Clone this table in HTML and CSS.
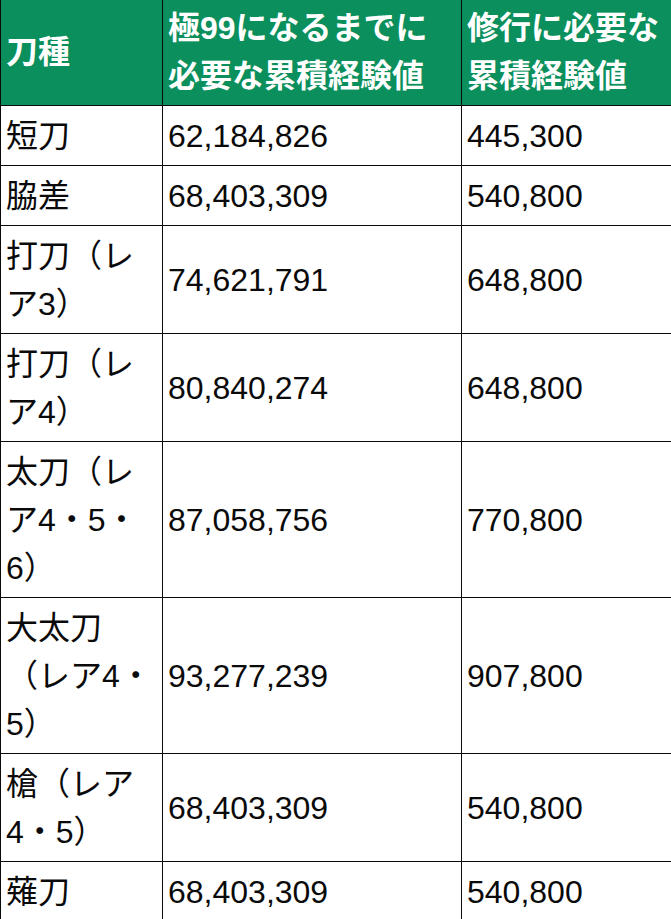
FILE: index.html
```html
<!DOCTYPE html>
<html lang="ja">
<head>
<meta charset="utf-8">
<link rel="stylesheet" href="styles.css">
</head>
<body>
<table class="exp-table">
  <colgroup>
    <col class="c1">
    <col class="c2">
    <col class="c3">
  </colgroup>
  <thead>
    <tr>
      <th>刀種</th>
      <th>極99になるまでに必要な累積経験値</th>
      <th>修行に必要な累積経験値</th>
    </tr>
  </thead>
  <tbody>
    <tr><td>短刀</td><td>62,184,826</td><td>445,300</td></tr>
    <tr><td>脇差</td><td>68,403,309</td><td>540,800</td></tr>
    <tr><td>打刀（レア3）</td><td>74,621,791</td><td>648,800</td></tr>
    <tr><td>打刀（レア4）</td><td>80,840,274</td><td>648,800</td></tr>
    <tr><td>太刀（レア4・5・6）</td><td>87,058,756</td><td>770,800</td></tr>
    <tr><td>大太刀（レア4・5）</td><td>93,277,239</td><td>907,800</td></tr>
    <tr><td>槍（レア4・5）</td><td>68,403,309</td><td>540,800</td></tr>
    <tr><td>薙刀</td><td>68,403,309</td><td>540,800</td></tr>
  </tbody>
</table>
</body>
</html>
```
FILE: styles.css
```css
html, body {
  margin: 0;
  padding: 0;
  background: #ffffff;
}
body {
  overflow: hidden;
}
.exp-table {
  border-collapse: collapse;
  table-layout: fixed;
  width: 673px;
  font-family: "Liberation Sans", "Noto Sans CJK JP", sans-serif;
  font-size: 32px;
  line-height: 48px;
  color: #0a0a0a;
}
.exp-table .c1 { width: 162px; }
.exp-table .c2 { width: 299px; }
.exp-table .c3 { width: 212px; }
.exp-table th,
.exp-table td {
  border: 1px solid #0a0a0a;
  padding: 6px 6px 5px 5px;
  text-align: left;
  vertical-align: middle;
}
.exp-table th {
  background: #0b8f5c;
  color: #ffffff;
  font-weight: bold;
  padding: 4px 6px 5px 5px;
  border-top: none;
}
```
